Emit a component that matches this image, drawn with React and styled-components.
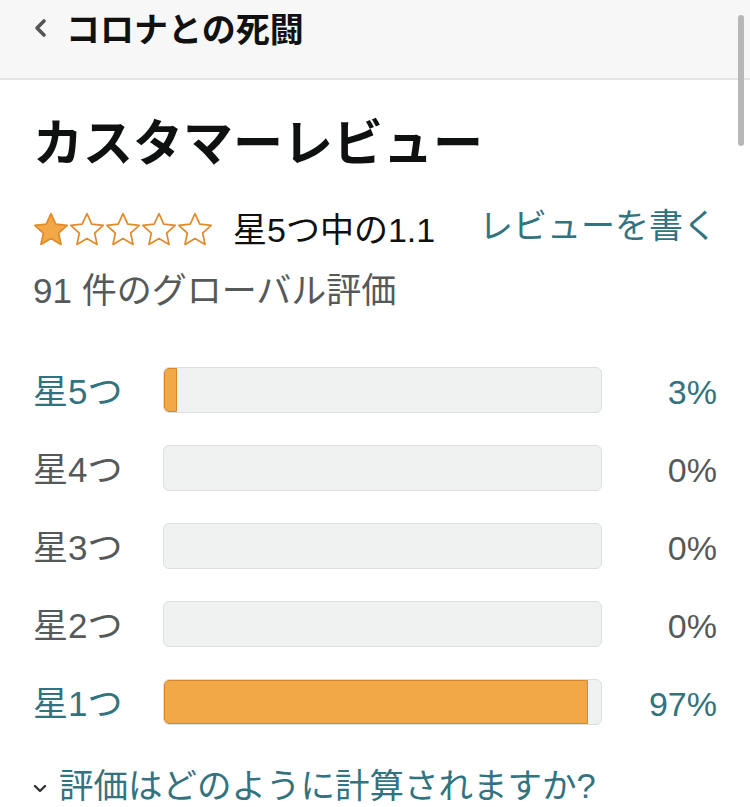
import React from 'react';
import styled, { createGlobalStyle } from 'styled-components';

const GlobalStyle = createGlobalStyle`
	html, body {
		margin: 0;
		padding: 0;
		background: #fff;
	}
	body {
		font-family: "Liberation Sans", "Noto Sans CJK JP", sans-serif;
		color: #0f1111;
	}
`;

const Page = styled.div`
	position: relative;
	width: 750px;
	min-height: 807px;
	overflow: hidden;
	background: #fff;
`;

const Header = styled.header`
	height: 80px;
	box-sizing: border-box;
	padding: 8px 33px 0;
	display: flex;
	align-items: flex-start;
	gap: 19px;
	background: #f7f7f7;
	border-bottom: 2px solid #e4e4e4;
`;

const HeaderTitle = styled.h1`
	margin: 0;
	font-size: 34px;
	line-height: 44px;
	font-weight: 700;
	color: #111;
`;

const BackIcon = styled.svg`
	width: 14px;
	height: 20px;
	margin-top: 10px;
`;

const ScrollThumb = styled.div`
	position: absolute;
	top: 15px;
	right: 6px;
	width: 6px;
	height: 131px;
	border-radius: 3px;
	background: #b7b7b7;
`;

const Main = styled.main`
	padding: 34px 33px 0;
`;

const Title = styled.h2`
	margin: 0;
	font-size: 50px;
	line-height: 60px;
	font-weight: 700;
	color: #0f1111;
`;

const RatingRow = styled.div`
	margin-top: 34px;
	height: 44px;
	display: flex;
	align-items: center;
`;

const Stars = styled.div`
	display: flex;
	margin-right: 20px;
`;

const StarSvg = styled.svg`
	width: 36px;
	height: 36px;
	display: block;
`;

const RatingText = styled.span`
	font-size: 34px;
	line-height: 44px;
	color: #0f1111;
`;

const Link = styled.a`
	color: #32737f;
	text-decoration: none;
	font-size: 34px;
	line-height: 44px;
`;

const WriteLink = styled(Link)`
	margin-left: auto;
	margin-top: -8px;
`;

const Count = styled.div`
	margin-top: 17px;
	font-size: 35px;
	line-height: 44px;
	color: #565959;
`;

const Histogram = styled.div`
	margin-top: 54px;
	display: grid;
	grid-template-columns: 130px 439px 1fr;
	grid-auto-rows: 46px;
	row-gap: 32px;
	align-items: center;
`;

const Label = styled.span`
	font-size: 35px;
	line-height: 42px;
	padding-top: 4px;
	color: ${props => (props.active ? '#32737f' : '#565959')};
`;

const Bar = styled.div`
	height: 46px;
	box-sizing: border-box;
	border-radius: 6px;
	background: #f0f2f2;
	border: 1px solid #dcdfe0;
	overflow: hidden;
`;

const Fill = styled.div`
	height: 100%;
	box-sizing: border-box;
	background: #f3a847;
	border: 1px solid #d9862a;
	border-radius: 5px 0 0 5px;
`;

const Percent = styled.span`
	text-align: right;
	font-size: 34px;
	line-height: 42px;
	padding-top: 4px;
	color: ${props => (props.active ? '#32737f' : '#565959')};
`;

const Footer = styled.div`
	margin-top: 39px;
	display: flex;
	align-items: center;
	gap: 12px;
`;

const DownIcon = styled.svg`
	width: 14px;
	height: 10px;
	margin-top: 6px;
`;

const FooterLink = styled(Link)`
	font-size: 34.5px;
`;

function Star({ filled }) {
	return (
		<StarSvg viewBox="1.6 1.6 20.8 20.8">
			<path
				d="M12 2.6l2.75 6.05 6.6.72-4.93 4.45 1.38 6.5L12 16.98l-5.8 3.34 1.38-6.5-4.93-4.45 6.6-.72z"
				fill={filled ? '#f3a847' : '#fff'}
				stroke="#e08a2a"
				strokeWidth="1"
				strokeLinejoin="round"
			/>
		</StarSvg>
	);
}

const rows = [
	{ label: '星5つ', pct: 3 },
	{ label: '星4つ', pct: 0 },
	{ label: '星3つ', pct: 0 },
	{ label: '星2つ', pct: 0 },
	{ label: '星1つ', pct: 97 },
];

function App() {
	return (
		<Page>
			<GlobalStyle />
			<Header>
				<BackIcon viewBox="0 0 14 20">
					<polyline points="11,3 4,10 11,17" fill="none" stroke="#555" strokeWidth="3.6" strokeLinecap="round" strokeLinejoin="round" />
				</BackIcon>
				<HeaderTitle>コロナとの死闘</HeaderTitle>
			</Header>
			<ScrollThumb />
			<Main>
				<Title>カスタマーレビュー</Title>
				<RatingRow>
					<Stars>
						{[1, 2, 3, 4, 5].map(i => <Star key={i} filled={i === 1} />)}
					</Stars>
					<RatingText>星5つ中の1.1</RatingText>
					<WriteLink href="#">レビューを書く</WriteLink>
				</RatingRow>
				<Count>91 件のグローバル評価</Count>
				<Histogram>
					{rows.map(r => (
						<React.Fragment key={r.label}>
							<Label active={r.pct > 0}>{r.label}</Label>
							<Bar>
								{r.pct > 0 && <Fill style={{ width: `${r.pct}%` }} />}
							</Bar>
							<Percent active={r.pct > 0}>{r.pct}%</Percent>
						</React.Fragment>
					))}
				</Histogram>
				<Footer>
					<DownIcon viewBox="0 0 14 10">
						<polyline points="2,2 7,7 12,2" fill="none" stroke="#333" strokeWidth="2.4" strokeLinecap="round" strokeLinejoin="round" />
					</DownIcon>
					<FooterLink href="#">評価はどのように計算されますか?</FooterLink>
				</Footer>
			</Main>
		</Page>
	);
}

export default App;
